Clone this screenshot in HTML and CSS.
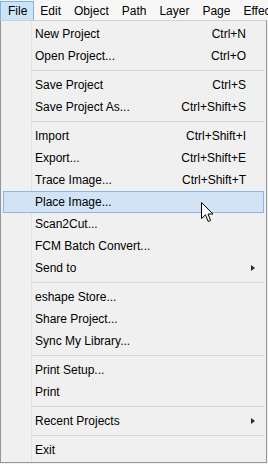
FILE: index.html
```html
<!DOCTYPE html>
<html>
<head>
<meta charset="utf-8">
<link rel="stylesheet" href="styles.css">
</head>
<body>
<div class="menubar">
  <span class="mb-item active">File</span>
  <span class="mb-item">Edit</span>
  <span class="mb-item">Object</span>
  <span class="mb-item">Path</span>
  <span class="mb-item">Layer</span>
  <span class="mb-item">Page</span>
  <span class="mb-item">Effects</span>
</div>
<div class="menu">
  <div class="item"><span class="label">New Project</span><span class="key">Ctrl+N</span></div>
  <div class="item"><span class="label">Open Project...</span><span class="key">Ctrl+O</span></div>
  <div class="sep"></div>
  <div class="item"><span class="label">Save Project</span><span class="key">Ctrl+S</span></div>
  <div class="item"><span class="label">Save Project As...</span><span class="key">Ctrl+Shift+S</span></div>
  <div class="sep"></div>
  <div class="item"><span class="label">Import</span><span class="key">Ctrl+Shift+I</span></div>
  <div class="item"><span class="label">Export...</span><span class="key">Ctrl+Shift+E</span></div>
  <div class="item"><span class="label">Trace Image...</span><span class="key">Ctrl+Shift+T</span></div>
  <div class="item hover"><span class="label">Place Image...</span><span class="key"></span></div>
  <div class="item"><span class="label">Scan2Cut...</span><span class="key"></span></div>
  <div class="item"><span class="label">FCM Batch Convert...</span><span class="key"></span></div>
  <div class="item sub"><span class="label">Send to</span><span class="arrow"></span></div>
  <div class="sep"></div>
  <div class="item"><span class="label">eshape Store...</span><span class="key"></span></div>
  <div class="item"><span class="label">Share Project...</span><span class="key"></span></div>
  <div class="item"><span class="label">Sync My Library...</span><span class="key"></span></div>
  <div class="sep"></div>
  <div class="item"><span class="label">Print Setup...</span><span class="key"></span></div>
  <div class="item"><span class="label">Print</span><span class="key"></span></div>
  <div class="sep"></div>
  <div class="item sub"><span class="label">Recent Projects</span><span class="arrow"></span></div>
  <div class="sep"></div>
  <div class="item"><span class="label">Exit</span><span class="key"></span></div>
</div>
<svg class="cursor" width="14" height="21" viewBox="0 0 14 21">
  <path d="M0.5 0.5 L0.5 16.5 L4.5 12.8 L7.2 19.5 L9.6 18.5 L7 12 L12 12 Z" fill="#fff" stroke="#000" stroke-width="1" stroke-linejoin="miter"/>
</svg>
</body>
</html>
```
FILE: styles.css
```css
html, body {
  margin: 0;
  padding: 0;
  background: #f0f0f0;
}
body {
  width: 268px;
  height: 464px;
  overflow: hidden;
  font-family: "Liberation Sans", Arial, sans-serif;
  font-size: 12px;
  color: #000;
  position: relative;
}
.menubar {
  height: 20px;
  background: #f7f7f7;
  display: flex;
  white-space: nowrap;
  overflow: hidden;
}
.mb-item {
  height: 18px;
  line-height: 18px;
  margin-top: 1px;
  padding: 0 6px 0 7px;
  border: 1px solid transparent;
  box-sizing: content-box;
}
.mb-item + .mb-item {
  margin-left: -2px;
}
.mb-item.active {
  background: #cce4f7;
  border-color: #7fb3e4;
}
.menu {
  width: 267px;
  box-sizing: border-box;
  border: 1px solid #979797;
  border-top-color: #d0d0d0;
  padding: 2px 2px 1px 2px;
  background-color: #f0f0f0;
  background-image: linear-gradient(to right, transparent 30px, #e2e2e2 30px, #e2e2e2 31px, transparent 31px);
}
.item {
  height: 20px;
  line-height: 20px;
  border: 1px solid transparent;
  display: flex;
  align-items: center;
  padding: 0 17px 0 31px;
  white-space: nowrap;
}
.item .label {
  flex: 1;
}
.item .key {
  text-align: right;
}
.item.hover {
  background: #d1e3f5;
  border-color: #8cb8e6;
}
.item.sub {
  padding-right: 8px;
}
.arrow {
  width: 0;
  height: 0;
  border-top: 3.5px solid transparent;
  border-bottom: 3.5px solid transparent;
  border-left: 4px solid #2a2a2a;
}
.sep {
  height: 7px;
  margin-left: 28px;
  background: linear-gradient(to bottom, transparent 3px, #d7d7d7 3px, #d7d7d7 4px, transparent 4px);
}
.cursor {
  position: absolute;
  left: 201px;
  top: 202px;
}
```
